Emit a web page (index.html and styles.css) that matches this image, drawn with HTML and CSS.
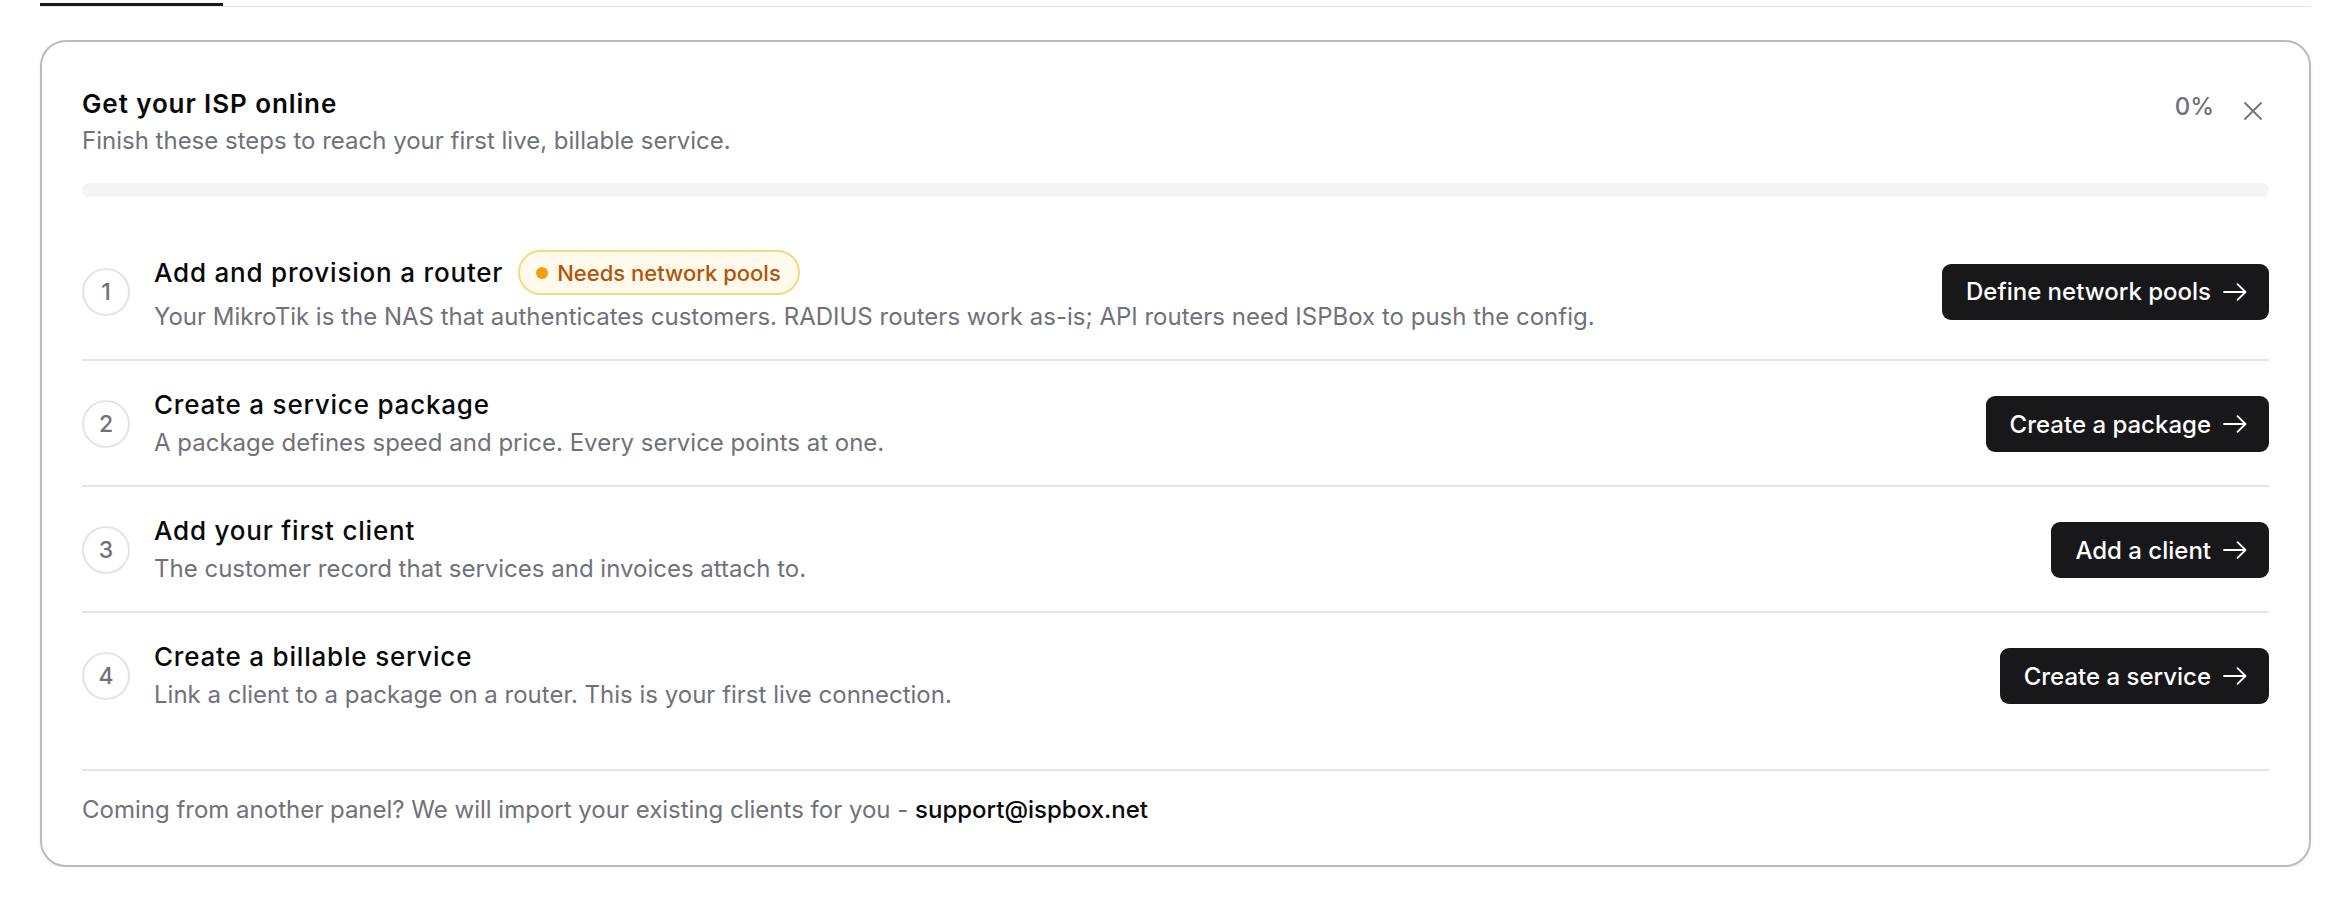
FILE: index.html
```html
<!DOCTYPE html>
<html lang="en">
<head>
    <meta charset="UTF-8">
    <meta name="viewport" content="width=device-width, initial-scale=1.0">
    <title>Get your ISP online</title>
    <link rel="stylesheet" href="styles.css">
</head>
<body>
    <div class="tabs">
        <div class="tab-active"></div>
    </div>

    <div class="card">
        <div class="card-head">
            <div>
                <h2 class="card-title">Get your ISP online</h2>
                <p class="card-sub">Finish these steps to reach your first live, billable service.</p>
            </div>
            <div class="head-right">
                <span class="percent">0%</span>
                <button class="close-btn" aria-label="Dismiss">
                    <svg width="18" height="18" viewBox="0 0 18 18"><path d="M1 1L17 17M17 1L1 17" stroke="#71717a" stroke-width="1.8" stroke-linecap="round" fill="none"/></svg>
                </button>
            </div>
        </div>

        <div class="progress"><div class="progress-fill" style="width:0%"></div></div>

        <div class="steps">
            <div class="step">
                <div class="step-num">1</div>
                <div class="step-text">
                    <div class="step-title-row">
                        <span class="step-title">Add and provision a router</span>
                        <span class="badge"><span class="badge-dot"></span>Needs network pools</span>
                    </div>
                    <p class="step-desc">Your MikroTik is the NAS that authenticates customers. RADIUS routers work as-is; API routers need ISPBox to push the config.</p>
                </div>
                <a class="step-btn" href="#">Define network pools
                    <svg width="24" height="18" viewBox="0 0 24 18"><path d="M1 9H22.5M14.5 1.2L22.5 9L14.5 16.8" stroke="#fff" stroke-width="1.8" stroke-linecap="round" stroke-linejoin="round" fill="none"/></svg>
                </a>
            </div>
            <div class="step">
                <div class="step-num">2</div>
                <div class="step-text">
                    <div class="step-title-row">
                        <span class="step-title">Create a service package</span>
                    </div>
                    <p class="step-desc">A package defines speed and price. Every service points at one.</p>
                </div>
                <a class="step-btn" href="#">Create a package
                    <svg width="24" height="18" viewBox="0 0 24 18"><path d="M1 9H22.5M14.5 1.2L22.5 9L14.5 16.8" stroke="#fff" stroke-width="1.8" stroke-linecap="round" stroke-linejoin="round" fill="none"/></svg>
                </a>
            </div>
            <div class="step">
                <div class="step-num">3</div>
                <div class="step-text">
                    <div class="step-title-row">
                        <span class="step-title">Add your first client</span>
                    </div>
                    <p class="step-desc">The customer record that services and invoices attach to.</p>
                </div>
                <a class="step-btn" href="#">Add a client
                    <svg width="24" height="18" viewBox="0 0 24 18"><path d="M1 9H22.5M14.5 1.2L22.5 9L14.5 16.8" stroke="#fff" stroke-width="1.8" stroke-linecap="round" stroke-linejoin="round" fill="none"/></svg>
                </a>
            </div>
            <div class="step">
                <div class="step-num">4</div>
                <div class="step-text">
                    <div class="step-title-row">
                        <span class="step-title">Create a billable service</span>
                    </div>
                    <p class="step-desc">Link a client to a package on a router. This is your first live connection.</p>
                </div>
                <a class="step-btn" href="#">Create a service
                    <svg width="24" height="18" viewBox="0 0 24 18"><path d="M1 9H22.5M14.5 1.2L22.5 9L14.5 16.8" stroke="#fff" stroke-width="1.8" stroke-linecap="round" stroke-linejoin="round" fill="none"/></svg>
                </a>
            </div>
        </div>

        <p class="card-foot">Coming from another panel? We will import your existing clients for you - <a href="#">support@ispbox.net</a></p>
    </div>
</body>
</html>
```

FILE: styles.css
```css
body {
    margin: 0;
    padding: 0 41px 0 40px;
    background-color: #fff;
    font-family: Inter, 'Liberation Sans', sans-serif;
    color: #09090b;
}
.tabs {
    height: 6px;
    border-bottom: 1.5px solid #e4e4e7;
    display: flex;
    align-items: flex-end;
}
.tab-active {
    width: 183px;
    height: 3px;
    background-color: #18181b;
}
.card {
    margin-top: 33px;
    border: 2px solid #bbbbbb;
    border-radius: 26px;
    padding: 46px 40px 39px;
    box-shadow: 0 2px 4px rgba(0, 0, 0, 0.06);
}
.card-head {
    display: flex;
    justify-content: space-between;
    align-items: flex-start;
}
.card-title {
    margin: 0;
    font-size: 26px;
    line-height: 32px;
    font-weight: 600;
    letter-spacing: 0.9px;
}
.card-sub {
    margin: 5px 0 0;
    font-size: 24px;
    line-height: 32px;
    color: #71717a;
}
.head-right {
    display: flex;
    align-items: center;
    gap: 30px;
    padding-top: 4px;
    padding-right: 7px;
}
.percent {
    font-size: 24px;
    font-weight: 500;
    color: #71717a;
}
.close-btn {
    border: none;
    background: none;
    padding: 0;
    display: flex;
    margin-top: 8px;
    cursor: pointer;
}
.progress {
    margin-top: 26px;
    height: 14px;
    border-radius: 7px;
    background-color: #f4f4f5;
    overflow: hidden;
}
.progress-fill {
    height: 100%;
    background-color: #18181b;
}
.steps {
    margin-top: 25px;
}
.step {
    display: flex;
    align-items: center;
    gap: 24px;
    padding: 28px 0 26px;
    border-bottom: 2px solid #e4e4e7;
}
.step:last-child {
    border-bottom: none;
}
.step-num {
    width: 44px;
    height: 44px;
    border: 2px solid #e4e4e7;
    border-radius: 50%;
    display: flex;
    align-items: center;
    justify-content: center;
    font-size: 23px;
    font-weight: 500;
    color: #71717a;
    flex-shrink: 0;
}
.step-text {
    flex: 1;
}
.step-title-row {
    display: flex;
    align-items: center;
    gap: 15px;
    min-height: 32px;
}
.step-title {
    font-size: 26px;
    line-height: 32px;
    font-weight: 450;
    letter-spacing: 0.8px;
}
.step-desc {
    margin: 6px 0 0;
    font-size: 24px;
    line-height: 32px;
    color: #71717a;
}
.badge {
    display: inline-flex;
    align-items: center;
    gap: 9px;
    height: 41px;
    padding: 0 17px 0 16px;
    border: 2px solid #f8d97a;
    border-radius: 23px;
    background-color: #fffaeb;
    color: #b45309;
    font-size: 22px;
    font-weight: 500;
}
.badge-dot {
    width: 12px;
    height: 12px;
    border-radius: 50%;
    background-color: #f59e0b;
}
.step-btn {
    display: flex;
    align-items: center;
    gap: 12px;
    height: 56px;
    padding: 0 22px 0 24px;
    border-radius: 9px;
    background-color: #18181b;
    color: #fff;
    font-size: 24px;
    font-weight: 500;
    text-decoration: none;
    flex-shrink: 0;
}
.card-foot {
    margin: 32px 0 0;
    padding-top: 23px;
    border-top: 2px solid #e4e4e7;
    font-size: 24px;
    line-height: 32px;
    color: #71717a;
}
.card-foot a {
    color: #09090b;
    font-weight: 500;
    text-decoration: none;
}
```
